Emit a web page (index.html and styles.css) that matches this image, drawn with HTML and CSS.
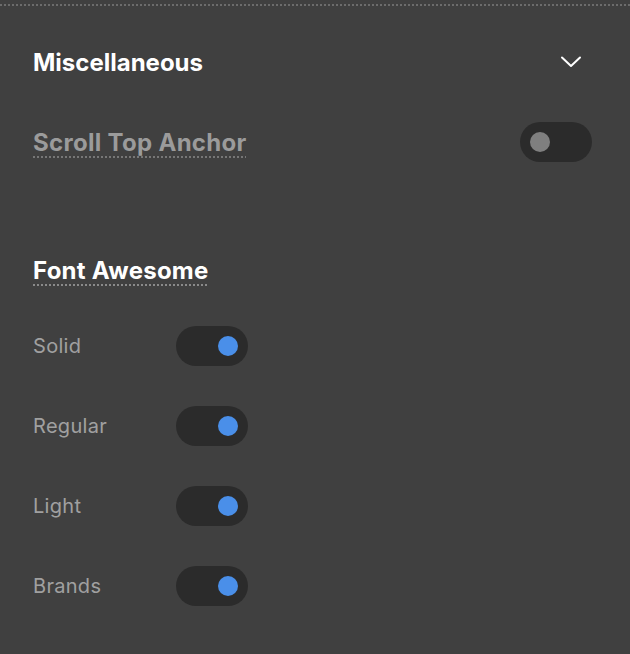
FILE: index.html
```html
<!DOCTYPE html>
<html>
<head>
<meta charset="utf-8">
<link rel="stylesheet" href="styles.css">
</head>
<body>
<div class="panel">
  <div class="header">
    <h2 class="title">Miscellaneous</h2>
    <svg class="chevron" width="24" height="24" viewBox="0 0 24 24"><path d="M3 7.5 L12 16 L21 7.5" fill="none" stroke="#ffffff" stroke-width="2" stroke-linecap="round" stroke-linejoin="round"/></svg>
  </div>
  <div class="setting">
    <span class="setting-label">Scroll Top Anchor</span>
    <span class="toggle"><span class="knob"></span></span>
  </div>
  <div class="group-title"><span class="group-text">Font Awesome</span></div>
  <div class="options">
    <span class="opt-label">Solid</span><span class="toggle on"><span class="knob"></span></span>
    <span class="opt-label">Regular</span><span class="toggle on"><span class="knob"></span></span>
    <span class="opt-label">Light</span><span class="toggle on"><span class="knob"></span></span>
    <span class="opt-label">Brands</span><span class="toggle on"><span class="knob"></span></span>
  </div>
</div>
</body>
</html>
```
FILE: styles.css
```css
html, body {
  margin: 0;
  padding: 0;
  background: #404040;
  height: 100%;
}
body {
  font-family: Inter, "Liberation Sans", sans-serif;
  overflow: hidden;
}
.panel {
  margin-top: 4px;
  border-top: 2px dotted #6c6c6c;
  padding: 0 38px 0 33px;
  height: 648px;
  box-sizing: border-box;
  background: #404040;
}
.header {
  display: flex;
  align-items: center;
  justify-content: space-between;
  margin-top: 36px;
  height: 40px;
}
.title {
  margin: 0;
  font-size: 24px;
  font-weight: 700;
  color: #ffffff;
}
.chevron {
  margin-right: 9px;
}
.setting {
  display: flex;
  align-items: center;
  justify-content: space-between;
  margin-top: 40px;
  height: 40px;
}
.setting-label {
  font-size: 24px;
  font-weight: 700;
  letter-spacing: 0.3px;
  color: #9b9b9b;
  text-decoration: underline dotted #777777;
  text-decoration-thickness: 2px;
  text-underline-offset: 6px;
}
.group-title {
  margin-top: 88px;
  height: 40px;
  display: flex;
  align-items: center;
}
.group-text {
  font-size: 24px;
  font-weight: 700;
  letter-spacing: 0.25px;
  color: #ffffff;
  text-decoration: underline dotted #8a8a8a;
  text-decoration-thickness: 2px;
  text-underline-offset: 6px;
}
.options {
  margin-top: 36px;
  display: grid;
  grid-template-columns: 143px 72px;
  grid-auto-rows: 40px;
  row-gap: 40px;
  align-items: center;
}
.opt-label {
  font-size: 20px;
  font-weight: 400;
  letter-spacing: 0.3px;
  color: #a0a0a0;
}
.toggle {
  display: flex;
  align-items: center;
  width: 72px;
  height: 40px;
  border-radius: 20px;
  background: #2b2b2b;
  padding: 0 10px;
  box-sizing: border-box;
}
.knob {
  width: 20px;
  height: 20px;
  border-radius: 50%;
  background: #7f7f7f;
}
.toggle.on {
  justify-content: flex-end;
}
.toggle.on .knob {
  background: #4a8fe9;
}
```
